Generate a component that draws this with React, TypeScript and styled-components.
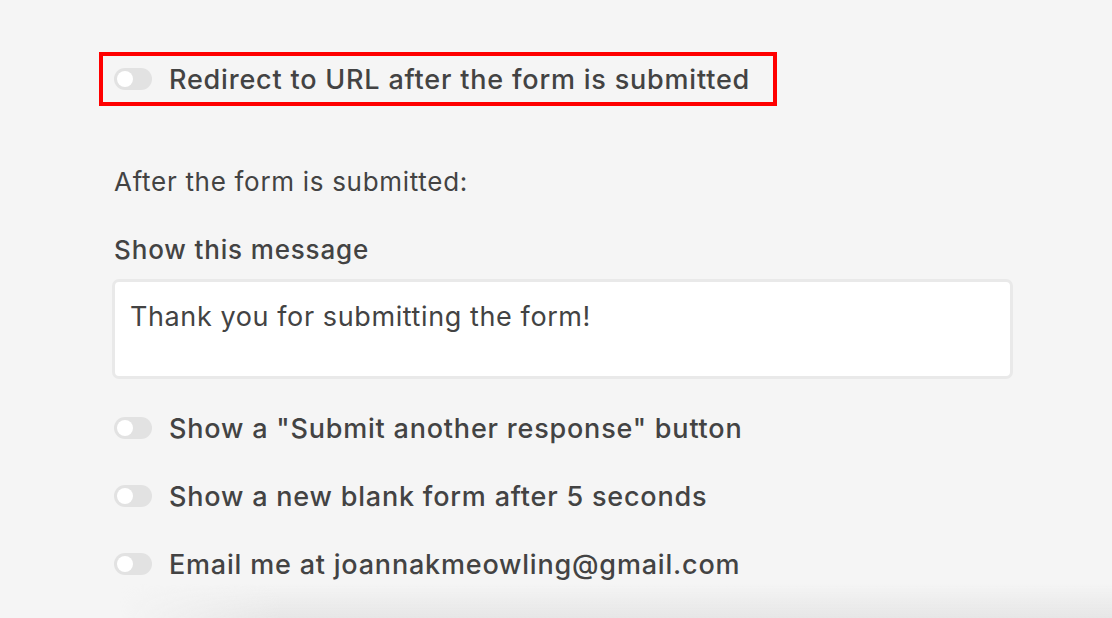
import React from "react";
import styled, { createGlobalStyle } from "styled-components";

const Global = createGlobalStyle`
  html, body { margin: 0; padding: 0; background: #f5f5f5; }
  body { font-family: Inter, "Open Sans", sans-serif; color: #444; }
`;

const Page = styled.div`
  width: 1112px;
  height: 618px;
  overflow: hidden;
  position: relative;
  background: #f5f5f5;
  box-sizing: border-box;
  padding: 52px 0 0 99px;
`;

const Fade = styled.div`
  position: absolute;
  left: 120px;
  right: 0;
  bottom: 0;
  height: 34px;
  background: linear-gradient(to bottom, rgba(230,230,230,0), rgba(230,230,230,1));
  -webkit-mask-image: linear-gradient(to right, transparent 0, #000 160px);
  mask-image: linear-gradient(to right, transparent 0, #000 160px);
  pointer-events: none;
`;

const Highlight = styled.div`
  display: inline-flex;
  border: 4px solid #f00;
  padding: 9px 20px 9px 11px;
  width: 678px;
  box-sizing: border-box;
`;

const Row = styled.label`
  display: flex;
  align-items: center;
  gap: 17px;
  height: 28px;
  font-size: 27px;
  font-weight: 500;
  letter-spacing: 0.8px;
  color: #434343;
  white-space: nowrap;
`;

const Toggle = styled.span`
  width: 38px;
  height: 22px;
  border-radius: 11px;
  background: #e2e2e2;
  position: relative;
  flex: none;
  &::after {
    content: "";
    position: absolute;
    left: 3px;
    top: 3px;
    width: 16px;
    height: 16px;
    border-radius: 50%;
    background: #fff;
  }
`;

const Body = styled.div`
  padding-left: 15px;
  display: flex;
  flex-direction: column;
  width: 899px;
`;

const Intro = styled.div`
  margin-top: 61px;
  font-size: 26px;
  font-weight: 400;
  letter-spacing: 0.7px;
  color: #434343;
  line-height: 30px;
`;

const Label = styled.div`
  margin-top: 38px;
  font-size: 26px;
  font-weight: 500;
  letter-spacing: 0.85px;
  color: #434343;
  line-height: 30px;
`;

const Message = styled.div`
  margin-top: 14px;
  margin-left: -2px;
  height: 100px;
  box-sizing: border-box;
  background: #fff;
  border: 3px solid #e9e9e9;
  border-radius: 7px;
  padding: 18px 15px 0;
  font-size: 27px;
  letter-spacing: 0.6px;
  line-height: 34px;
  color: #434343;
`;

const Options = styled.div`
  margin-top: 35px;
  display: flex;
  flex-direction: column;
  gap: 40px;
`;

export default function App() {
  return (
    <>
      <Global />
      <Page>
        <Highlight>
          <Row>
            <Toggle />
            Redirect to URL after the form is submitted
          </Row>
        </Highlight>
        <Body>
          <Intro>After the form is submitted:</Intro>
          <Label>Show this message</Label>
          <Message>Thank you for submitting the form!</Message>
          <Options>
            <Row>
              <Toggle />
              Show a "Submit another response" button
            </Row>
            <Row>
              <Toggle />
              Show a new blank form after 5 seconds
            </Row>
            <Row>
              <Toggle />
              Email me at joannakmeowling@gmail.com
            </Row>
          </Options>
        </Body>
        <Fade />
      </Page>
    </>
  );
}
